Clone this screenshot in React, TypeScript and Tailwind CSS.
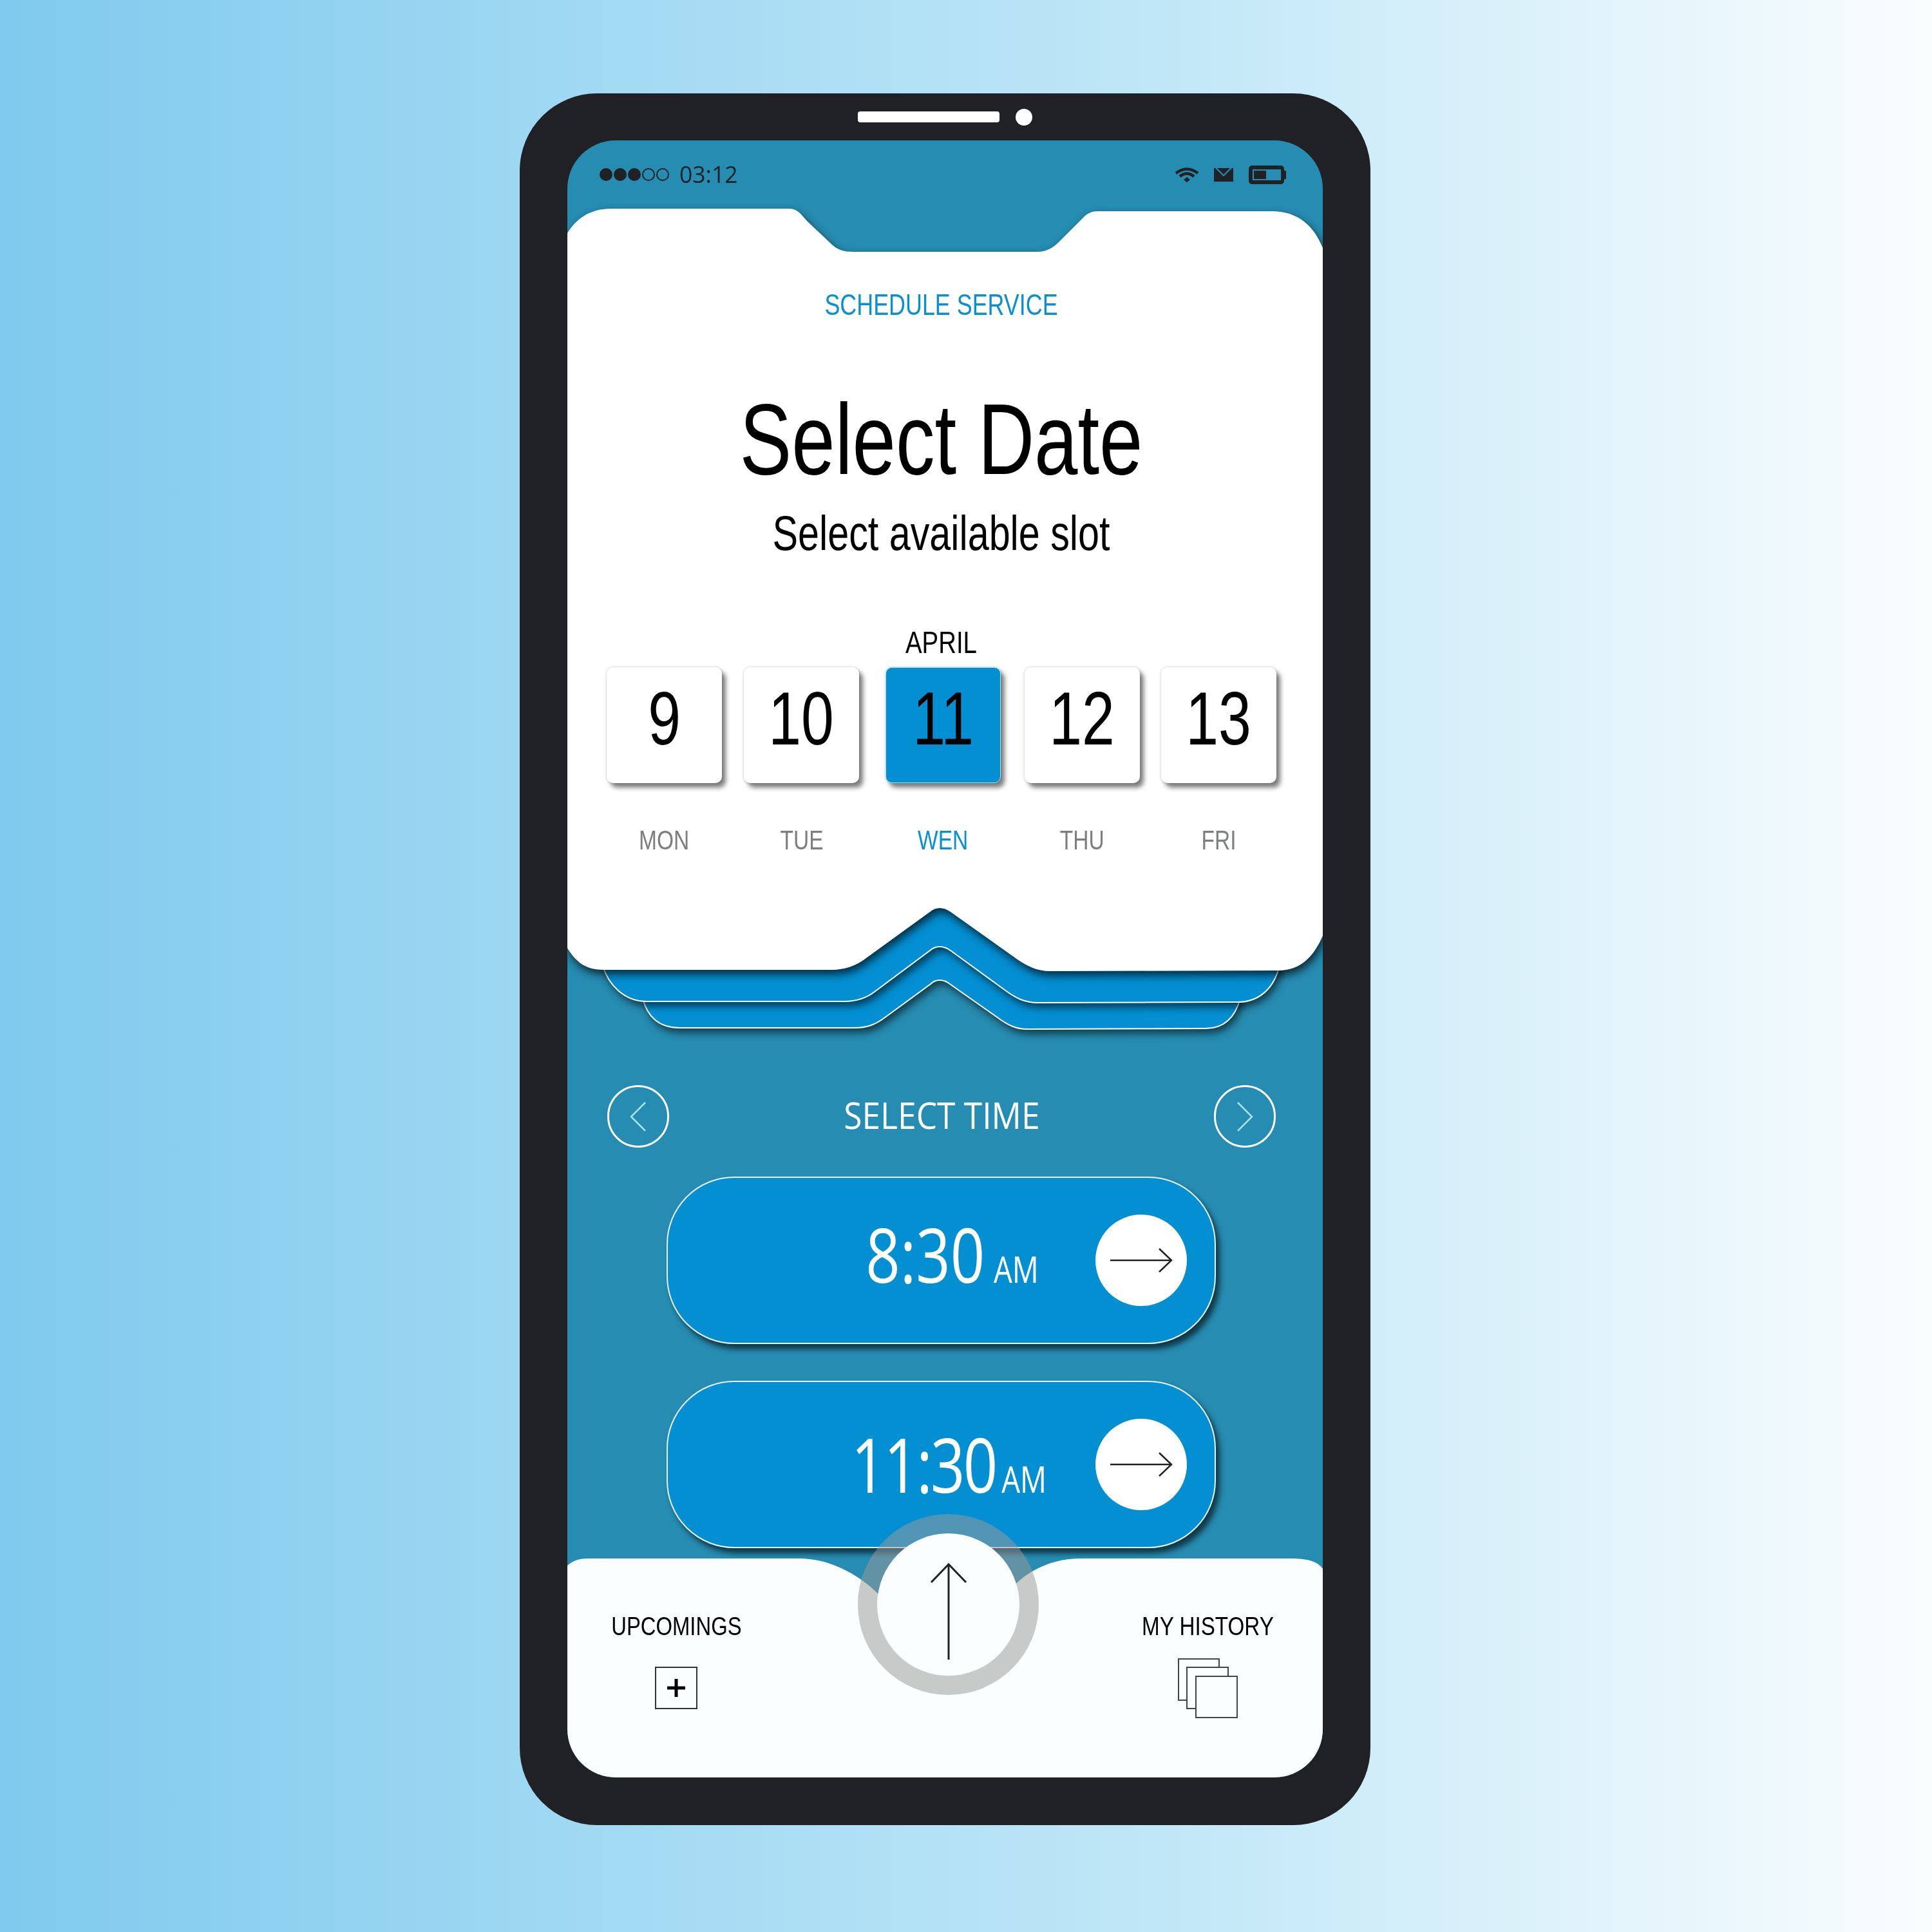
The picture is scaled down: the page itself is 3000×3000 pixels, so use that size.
const days = [
  { date: '9', name: 'MON', gap: '' },
  { date: '10', name: 'TUE', gap: 'ml-[34px]' },
  { date: '11', name: 'WEN', gap: 'ml-[41px]', active: true },
  { date: '12', name: 'THU', gap: 'ml-[37px]' },
  { date: '13', name: 'FRI', gap: 'ml-[33px]' },
];

const slots = [
  { time: '8:30', timeClass: '', textClass: 'mr-[88px] mb-[22px]', amClass: 'ml-[17px]', top: 'mt-[45px]' },
  { time: '11:30', timeClass: 'tracking-[-3.5px]', textClass: 'mr-[76px] mb-[4px]', amClass: 'ml-[11px]', top: 'mt-[57px]' },
];

function StatusIcons() {
  return (
    <div className="flex items-center">
      <svg width="38" height="24" viewBox="0 0 38 24" fill="none" stroke="#1f2125">
        <path d="M2 10 Q19 -3 36 10" strokeWidth="4.5" />
        <path d="M8 15 Q19 6 30 15" strokeWidth="4.5" />
        <path d="M14 20 L19 16 L24 20 L19 24 Z" fill="#1f2125" stroke="none" />
      </svg>
      <svg className="ml-[23px]" width="30" height="21" viewBox="0 0 30 21">
        <rect width="30" height="21" fill="#1f2125" />
        <path d="M2 0 L15 13 L28 0 L25 0 L15 10 L5 0 Z" fill="#268cb1" />
      </svg>
      <svg className="ml-[24px]" width="58" height="29" viewBox="0 0 58 29">
        <rect width="55" height="29" rx="5" fill="#1f2125" />
        <rect x="6" y="6" width="44" height="17" fill="#268cb1" />
        <rect x="8" y="8" width="19" height="13" fill="#1f2125" />
        <rect x="53" y="8" width="5" height="13" rx="1" fill="#1f2125" />
      </svg>
    </div>
  );
}

function CardShape() {
  return (
    <svg className="absolute left-0 top-0" width="1173" height="1400" viewBox="881 218 1173 1400">
      <path
        className="drop-shadow-[4px_7px_6px_rgba(0,0,0,0.55)]"
        d="M998 1450 L998 1550 C1005 1580 1025 1596 1055 1596 L1327 1596 C1345 1596 1358 1592 1374 1580 L1445 1528 C1453 1520 1465 1520 1475 1528 L1549 1580 C1565 1592 1578 1598 1595 1598 L1872 1597 C1900 1597 1918 1580 1926 1550 L1926 1450 Z"
        fill="#038fd2"
        stroke="#fff"
        strokeWidth="2"
      />
      <path
        className="drop-shadow-[4px_7px_6px_rgba(0,0,0,0.55)]"
        d="M936 1390 L936 1500 C945 1530 970 1555 1004 1555 L1311 1555 C1330 1555 1345 1550 1358 1540 L1444 1476 C1453 1468 1465 1468 1476 1476 L1564 1540 C1578 1550 1592 1557 1611 1557 L1922 1556 C1955 1556 1978 1535 1987 1500 L1987 1390 Z"
        fill="#038fd2"
        stroke="#fff"
        strokeWidth="2"
      />
      <path
        className="drop-shadow-[3px_7px_7px_rgba(0,0,0,0.7)]"
        d="M881 362 C895 340 915 324 950 324 L1225 324 C1240 324 1245 335 1255 345 L1290 378 C1300 388 1310 391 1325 391 L1610 391 C1625 391 1635 385 1645 375 L1680 340 C1688 331 1695 328 1705 328 L1975 328 C2015 328 2040 350 2054 385 L2054 1453 C2040 1485 2020 1507 1985 1507 L1630 1508 C1610 1508 1595 1500 1580 1490 L1476 1416 C1465 1408 1453 1408 1444 1416 L1346 1487 C1330 1500 1310 1506 1292 1506 L938 1506 C910 1506 895 1495 881 1472 Z"
        fill="#fff"
      />
    </svg>
  );
}

function Chevron({ right }: { right?: boolean }) {
  return (
    <div className="flex h-[97px] w-[96px] items-center justify-center rounded-full border-[3px] border-white">
      <svg width="28" height="48" viewBox="0 0 28 48" fill="none" stroke="#a8e4ee" strokeWidth="2.5">
        <path d={right ? 'M3 2 L25 24 L3 46' : 'M25 2 L3 24 L25 46'} />
      </svg>
    </div>
  );
}

export default function App() {
  return (
    <div className="h-[3000px] w-[3000px] bg-linear-to-r from-[#7fcaee] via-[#c0e7f7] via-60% to-[#fafdfe] pl-[807px] pt-[145px] font-['Liberation_Sans',sans-serif]">
      <div className="relative h-[2689px] w-[1321px] rounded-[120px] bg-[#1f2125] pl-[74px] pt-[73px]">
        <div className="absolute left-[525px] top-[28px] h-[17px] w-[220px] rounded-[4px] bg-white" />
        <div className="absolute left-[770px] top-[24px] h-[26px] w-[26px] rounded-full bg-white" />

        <div className="relative h-[2542px] w-[1173px] overflow-hidden rounded-[75px] bg-[#268cb1]">
          <CardShape />

          <div className="relative flex h-[106px] items-center justify-between pl-[50px] pr-[57px]">
            <div className="flex items-center">
              <div className="flex gap-[2px]">
                <span className="h-[20px] w-[20px] rounded-full bg-[#1f2125]" />
                <span className="h-[20px] w-[20px] rounded-full bg-[#1f2125]" />
                <span className="h-[20px] w-[20px] rounded-full bg-[#1f2125]" />
                <span className="h-[20px] w-[20px] rounded-full border-2 border-[#1f2125]" />
                <span className="h-[20px] w-[20px] rounded-full border-2 border-[#1f2125]" />
              </div>
              <span className="mb-[3px] ml-[16px] origin-left scale-x-[0.96] font-['Open_Sans',sans-serif] text-[37px] leading-[37px] text-[#1f2125]">
                03:12
              </span>
            </div>
            <StatusIcons />
          </div>

          <div className="relative">
            <div className="pr-[12px]">
              <p className="mt-[126px] scale-x-[0.78] text-center text-[46px] leading-[46px] whitespace-nowrap text-[#0a90d2]">
                SCHEDULE SERVICE
              </p>
              <h1 className="mt-[106px] scale-x-[0.776] text-center text-[156px] leading-[160px] whitespace-nowrap text-black">
                Select Date
              </h1>
              <p className="mt-[28px] scale-x-[0.78] text-center text-[76px] leading-[76px] whitespace-nowrap text-black">
                Select available slot
              </p>
              <p className="mt-[108px] scale-x-[0.8] text-center text-[48px] leading-[48px] text-black">APRIL</p>
            </div>

            <div className="mt-[14px] flex pl-[61px]">
              {days.map((day) => (
                <div key={day.date} className={`flex w-[179px] flex-col items-center ${day.gap}`}>
                  <div
                    className={`flex h-[180px] w-[179px] items-center justify-center rounded-[10px] pb-[22px] shadow-[0_0_4px_rgba(0,0,0,0.2),6px_7px_7px_rgba(0,0,0,0.5)] ${
                      day.active ? 'border border-[#a5e3ee] bg-[#038fd2]' : 'bg-white'
                    }`}
                  >
                    <span className="scale-x-[0.78] text-[117px] leading-[117px] text-black">{day.date}</span>
                  </div>
                  <span
                    className={`mt-[67px] scale-x-[0.78] text-[43px] leading-[43px] ${
                      day.active ? 'text-[#0a90d2]' : 'text-[#7d7f7f]'
                    }`}
                  >
                    {day.name}
                  </span>
                </div>
              ))}
            </div>
          </div>

          <div className="relative mt-[359px] flex h-[97px] items-center justify-between pl-[62px] pr-[73px]">
            <Chevron />
            <span className="mb-[5px] scale-x-[0.92] font-['Open_Sans',sans-serif] text-[56px] leading-[56px] whitespace-nowrap text-white">
              SELECT TIME
            </span>
            <Chevron right />
          </div>

          {slots.map((slot) => (
            <div
              key={slot.time}
              className={`relative ml-[154px] flex h-[260px] w-[853px] items-center justify-end rounded-[105px] border-2 border-[#e8f4f8] bg-[#038fd2] pr-[43px] shadow-[6px_8px_9px_rgba(0,0,0,0.6)] ${slot.top}`}
            >
              <div
                className={`flex origin-right scale-x-[0.8] items-baseline font-['Open_Sans',sans-serif] whitespace-nowrap text-white ${slot.textClass}`}
              >
                <span className={`text-[117px] leading-[117px] ${slot.timeClass}`}>{slot.time}</span>
                <span className={`text-[57px] leading-[57px] ${slot.amClass}`}>AM</span>
              </div>
              <div className="flex h-[142px] w-[142px] items-center justify-center rounded-full bg-white">
                <svg width="98" height="40" viewBox="0 0 98 40" fill="none" stroke="#1f2125" strokeWidth="2.5">
                  <path d="M1 20 H96 M77 2 L96 20 L77 38" />
                </svg>
              </div>
            </div>
          ))}

          <div className="relative mt-[16px] flex h-[341px] justify-between pl-[67px] pr-[76px] pt-[85px] text-black">
            <svg className="absolute left-0 top-0" width="1173" height="341" viewBox="881 2419 1173 341">
              <path
                d="M881 2430 C890 2422 900 2419 914 2419 L1241 2419 C1290 2419 1335 2445 1366 2476 L1472 2560 L1580 2456 C1605 2433 1640 2419 1677 2419 L2004 2419 C2030 2419 2045 2423 2054 2435 L2054 2760 L881 2760 Z"
                fill="#fbfefe"
              />
            </svg>

            <div className="relative flex w-[204px] flex-col items-center">
              <span className="scale-x-[0.8] text-[41px] leading-[41px] whitespace-nowrap">UPCOMINGS</span>
              <div className="mt-[42px] flex h-[66px] w-[66px] items-center justify-center border-2 border-[#333]">
                <svg width="28" height="28" viewBox="0 0 28 28" fill="#000">
                  <path d="M11.5 0 H16.5 V11.5 H28 V16.5 H16.5 V28 H11.5 V16.5 H0 V11.5 H11.5 Z" />
                </svg>
              </div>
            </div>

            <div className="relative flex w-[205px] flex-col items-center">
              <span className="scale-x-[0.81] text-[41px] leading-[41px] whitespace-nowrap">MY HISTORY</span>
              <svg className="mt-[29px]" width="93" height="93" viewBox="0 0 93 93" fill="#fbfefe" stroke="#444" strokeWidth="2">
                <rect x="1" y="1" width="63" height="64" />
                <rect x="14" y="14" width="64" height="64" />
                <rect x="28" y="28" width="64" height="64" />
              </svg>
            </div>

            <div className="absolute left-[451px] top-[-69px] flex h-[281px] w-[281px] items-center justify-center rounded-full border-[30px] border-[#99999985] bg-[#fbfefe] bg-clip-padding">
              <svg className="mt-[20px]" width="58" height="150" viewBox="0 0 58 150" fill="none" stroke="#1f2125" strokeWidth="3">
                <path d="M29 150 V2 M2 30 L29 2 L56 30" />
              </svg>
            </div>
          </div>
        </div>
      </div>
    </div>
  );
}
